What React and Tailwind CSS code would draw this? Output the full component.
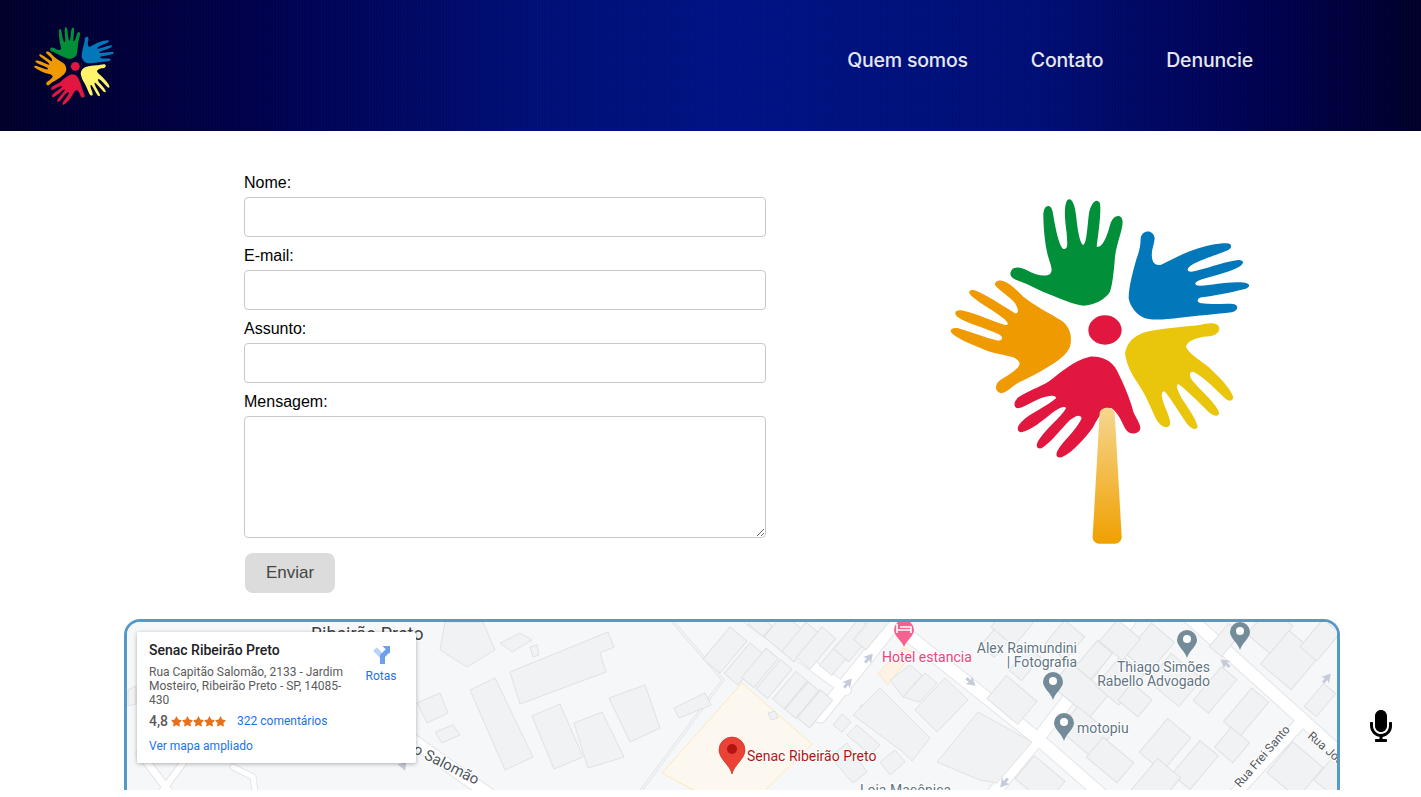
import React from 'react';
import { FaMicrophone, FaStar } from 'react-icons/fa';

const HANDS = {
  green:
    'M245 240C255 228 275 232 295 243C315 254 345 262 360 252C370 242 362 225 356 205C345 170 340 110 340 75C340 45 362 38 368 65C375 105 385 165 400 177C415 180 412 160 410 130C405 90 400 50 412 30C425 20 435 45 438 75C442 110 448 160 460 165C470 160 472 110 477 70C482 40 500 20 510 40C514 70 505 130 500 170C515 175 530 145 540 105C548 75 575 68 578 95C578 120 560 160 555 200C552 240 548 280 540 305C525 330 490 345 460 347C430 345 390 325 350 310C320 297 290 280 265 272C245 265 235 255 245 240Z',
  blue:
    'M632 145C635 120 670 115 674 145C672 170 660 185 668 212C675 228 690 228 705 218C735 205 760 190 790 180C825 168 860 160 890 160C905 160 908 172 895 180C860 195 810 210 785 225C770 235 768 245 785 245C820 240 880 215 925 210C945 210 942 222 925 232C890 250 830 262 805 272C790 280 795 287 810 287C850 285 900 272 945 278C962 282 962 290 945 297C900 308 850 318 815 322C798 326 800 338 815 340C845 345 880 340 910 342C928 346 925 362 905 367C860 372 800 378 750 383C710 388 670 392 645 385C620 375 600 350 596 325C596 290 610 240 620 205C628 185 632 165 632 145Z',
  orange:
    'M215 272C235 275 255 295 280 320C310 345 360 370 395 392C420 410 428 440 420 470C410 495 380 515 355 530C325 548 295 565 270 575C250 585 235 605 215 610C198 608 192 590 205 575C225 560 250 550 265 530C275 518 265 510 250 502C225 495 190 490 165 480C130 465 90 450 68 432C55 420 65 412 85 415C120 425 170 445 205 452C220 450 220 440 205 432C170 415 110 400 82 380C68 365 80 358 100 362C140 370 190 395 225 405C240 405 232 395 220 385C190 360 130 330 118 310C115 298 130 298 145 305C180 322 225 350 255 370C268 372 265 355 255 340C240 320 205 300 195 285C193 275 205 270 215 272Z',
  red:
    'M480 500C510 498 545 510 560 540C580 580 600 625 610 665C618 685 635 705 630 720C620 735 595 735 585 715C575 695 565 670 545 655C525 650 505 680 490 710C465 745 430 785 395 802C375 805 375 790 390 770C410 745 445 710 455 685C450 670 435 680 420 690C395 715 365 755 335 775C318 778 315 765 330 745C350 715 395 680 408 655C405 645 385 655 365 670C340 690 305 720 275 727C260 725 258 712 275 695C300 670 350 650 378 625C378 612 350 618 325 628C300 640 275 655 262 655C250 650 250 635 265 622C290 605 330 590 355 575C390 550 430 510 480 500Z',
  yellow:
    'M585 490C590 460 610 435 650 425C700 415 760 410 810 405C835 398 865 395 868 415C868 435 845 440 820 440C795 445 770 455 768 470C775 490 810 510 835 530C865 560 900 590 910 622C908 635 895 635 885 625C860 600 820 560 790 545C775 545 778 560 790 575C815 605 860 640 868 670C865 682 850 678 835 665C810 640 770 600 745 582C735 585 745 605 755 625C775 655 800 690 803 712C795 722 780 715 770 700C750 670 725 630 705 605C690 600 695 625 705 650C715 675 725 695 718 708C705 718 690 705 680 690C665 660 650 620 630 590C610 560 590 530 585 490Z',
};

function Hands({ yellow }) {
  return (
    <>
      <path d={HANDS.green} fill="#028f3a" />
      <path d={HANDS.blue} fill="#0277ba" />
      <path d={HANDS.orange} fill="#ef9a00" />
      <path d={HANDS.red} fill="#e1173f" />
      <path d={HANDS.yellow} fill={yellow} />
      <ellipse cx="525" cy="420" rx="50" ry="44" fill="#e1173f" />
    </>
  );
}

function BigLogo() {
  return (
    <svg viewBox="0 0 1020 1080" className="w-[340px] h-[360px] shrink-0 mt-[16px] ml-[164px]">
      <defs>
        <linearGradient id="trunk" x1="0" y1="0" x2="0" y2="1">
          <stop offset="0" stopColor="#f6d68f" />
          <stop offset="1" stopColor="#f0a000" />
        </linearGradient>
      </defs>
      <Hands yellow="#e9c50b" />
      <path
        d="M509 668C515 648 548 648 554 668L575 1040C575 1052 566 1061 554 1061H508C496 1061 487 1052 488 1040Z"
        fill="url(#trunk)"
      />
    </svg>
  );
}

// rects follow the street grid: [cx, cy, along, across]
const BUILDINGS = [
  [725, 650, 22, 42], [744, 664, 18, 40], [760, 668, 16, 38], [774, 679, 15, 38], [790, 690, 15, 36], [802, 700, 14, 36], [815, 709, 16, 36],
  [783, 633, 24, 30], [800, 642, 16, 38], [816, 648, 18, 40], [836, 658, 16, 32], [854, 640, 20, 40], [872, 630, 16, 38], [760, 625, 20, 14],
  [997, 640, 18, 30], [1025, 664, 16, 30], [1012, 625, 30, 30],
  [1065, 640, 26, 30], [1094, 660, 20, 34], [1080, 690, 50, 30], [1120, 680, 30, 40], [1150, 648, 30, 40], [1120, 640, 30, 28],
  [1135, 700, 26, 22], [1175, 680, 40, 36], [1215, 690, 20, 44], [1246, 712, 22, 44], [1225, 640, 16, 30], [1290, 660, 40, 44], [1270, 630, 30, 36], [1320, 640, 22, 36],
  [1012, 700, 40, 30], [1085, 732, 44, 30], [1110, 760, 40, 26], [1165, 745, 30, 44], [1195, 765, 24, 44], [1232, 745, 24, 26], [1320, 700, 16, 30], [1295, 770, 40, 40], [1335, 778, 30, 30],
  [1155, 785, 30, 44], [1040, 780, 40, 30],
];

const PLAIN = [
  '510,672 608,632 614,647 600,653 606,672 520,704',
  '530,647 537,645 539,655 533,657',
  '532,716 560,704 583,757 554,769',
  '574,723 602,712 624,757 588,768',
  '609,698 645,685 660,728 630,742',
  '674,708 705,693 711,705 679,718',
  '470,690 495,678 533,757 505,770',
  '417,703 440,693 448,713 427,723',
  '435,732 453,725 460,735 442,743',
  '445,622 483,622 495,650 467,667 440,650',
  '500,643 520,633 532,640 512,652',
  '768,713 775,711 778,718 771,720',
  '860,706 868,703 871,712 863,715',
  '128,690 136,686 136,704 128,706',
  '853,715 880,688 930,738 912,761 903,752',
  '890,680 910,665 922,675 903,697',
  '903,697 925,673 937,683 920,702',
  '915,710 945,678 968,700 937,732',
  '937,762 978,712 1032,742 997,783 980,780',
  '833,725 842,714 851,722 842,732',
  '847,735 857,725 880,745 870,755',
  '830,757 847,743 867,772 853,783',
  '880,762 895,750 905,762 890,775',
];

const ROADS = [
  ['M1130 620L1037 740L970 822', 12],
  ['M889 620L1037 738L1110 802', 12],
  ['M1190 618L1303 720L1345 758', 12],
  ['M1303 720L1225 805', 11],
  ['M903 612L820 716', 13],
  ['M750 620L846 690', 10],
  ['M395 728L490 795', 12],
  ['M140 753L168 790', 7],
  ['M183 763L163 790', 6],
  ['M233 767L253 777L255 792', 5],
  ['M673 622L723 680L640 792', 1],
];

const ARROWS = [
  [848, 683, 40], [869, 658, 40], [971, 682, 130], [1225, 663, 310], [1327, 678, 40], [1004, 783, 220], [403, 765, 160],
];

const GREY_PINS = [[1053, 682], [1064, 723], [1187, 640], [1240, 632]];

const PIN = 'M0 18C-2 11-10 6-10 0A10 10 0 1 1 10 0C10 6 2 11 0 18Z';

const LABEL = {
  stroke: '#ffffff',
  strokeWidth: 2,
  paintOrder: 'stroke',
};

function MapDrawing() {
  return (
    <svg viewBox="127 622 1210 168" className="block w-[1210px] h-[168px] bg-[#f6f7f9] font-['Roboto',sans-serif]">
      <polygon points="742,683 812,744 740,815 662,773" fill="#fdf8ef" stroke="#fce7b9" />
      <polygon points="878,673 903,648 913,652 888,685" fill="#fdf3e4" stroke="#fbe6c4" />
      {ROADS.map(([d, w], i) => (
        <path key={`c${i}`} d={d} fill="none" stroke="#e3e5e9" strokeWidth={w + 2} strokeLinecap="round" />
      ))}
      {ROADS.map(([d, w], i) => (
        <path key={`r${i}`} d={d} fill="none" stroke="#ffffff" strokeWidth={w} strokeLinecap="round" />
      ))}
      {BUILDINGS.map(([cx, cy, w, h], i) => (
        <rect
          key={i}
          x={cx - w / 2}
          y={cy - h / 2}
          width={w}
          height={h}
          fill="#f1f2f4"
          stroke="#e0e1e4"
          transform={`rotate(40 ${cx} ${cy})`}
        />
      ))}
      {PLAIN.map((points) => (
        <polygon key={points} points={points} fill="#f1f2f4" stroke="#e0e1e4" />
      ))}
      {ARROWS.map(([x, y, a]) => (
        <path key={`${x}${y}`} d="M0 -6L5 3L1.5 1.5L1.5 6H-1.5L-1.5 1.5L-5 3Z" fill="#c6cbdb" transform={`translate(${x} ${y}) rotate(${a})`} />
      ))}

      <text x="311" y="640" fontSize="18" fill="#3c4043" {...LABEL}>Ribeirão Preto</text>
      <text x="0" y="0" fontSize="15" fill="#50565c" textAnchor="end" transform="translate(476 785) rotate(27)" {...LABEL}>
        Rua Capitão Salomão
      </text>

      <g transform="translate(904 630)">
        <path d="M0 17C-2 11-10 6-10 0A10 10 0 1 1 10 0C10 6 2 11 0 17Z" fill="#f4628f" />
        <path d="M-7 -6V3M-7 0H7V3M-4 -3H7V0" stroke="#ffffff" strokeWidth="1.6" fill="none" />
      </g>
      <text x="882" y="662" fontSize="14" fill="#e8447a" {...LABEL}>Hotel estancia</text>

      <text x="1077" y="653" fontSize="14" fill="#5f7583" textAnchor="end" {...LABEL}>Alex Raimundini</text>
      <text x="1077" y="667" fontSize="14" fill="#5f7583" textAnchor="end" {...LABEL}>| Fotografia</text>
      <text x="1210" y="672" fontSize="14" fill="#5f7583" textAnchor="end" {...LABEL}>Thiago Simões</text>
      <text x="1210" y="686" fontSize="14" fill="#5f7583" textAnchor="end" {...LABEL}>Rabello Advogado</text>
      <text x="1077" y="733" fontSize="14" fill="#5f7583" {...LABEL}>motopiu</text>
      <text x="860" y="795" fontSize="14" fill="#5f7583" {...LABEL}>Loja Maçônica</text>
      {GREY_PINS.map(([x, y]) => (
        <g key={x} transform={`translate(${x} ${y})`}>
          <path d={PIN} fill="#748c9a" />
          <circle cx="0" cy="-1" r="4" fill="#ffffff" />
        </g>
      ))}

      <g transform="translate(732 750)">
        <path d="M0 24C-2 15-13 9-13 0A13 13 0 1 1 13 0C13 9 2 15 0 24Z" fill="#ea4335" stroke="#c5221f" strokeWidth="0.6" />
        <circle cx="0" cy="-1" r="5" fill="#b31412" />
      </g>
      <text x="747" y="761" fontSize="14" fill="#b31412" {...LABEL}>Senac Ribeirão Preto</text>

      <text transform="translate(1240 788) rotate(-49)" fontSize="12" fill="#50565c" {...LABEL}>Rua Frei Santo</text>
      <text transform="translate(1307 737) rotate(41)" fontSize="12" fill="#50565c" {...LABEL}>Rua João</text>
    </svg>
  );
}

function PlaceCard() {
  return (
    <div className="absolute left-[10px] top-[10px] w-[279px] h-[131px] bg-white shadow-[0_1px_4px_rgba(0,0,0,0.3)] rounded-[2px] pl-[12px] pt-[10px] font-['Roboto',sans-serif]">
      <p className="text-[14px] leading-[17px] font-medium text-[#202124]">Senac Ribeirão Preto</p>
      <p className="mt-[6px] w-[200px] text-[12px] leading-[14px] text-[#5b5b5b]">
        Rua Capitão Salomão, 2133 - Jardim Mosteiro, Ribeirão Preto - SP, 14085-430
      </p>
      <div className="flex items-center mt-[4px] h-[20px]">
        <span className="text-[14px] text-[#5b5b5b] font-medium">4,8</span>
        <span className="flex ml-[3px]">
          {[0, 1, 2, 3, 4].map((i) => (
            <FaStar key={i} className="w-[11px] h-[11px] text-[#e7711b]" />
          ))}
        </span>
        <span className="ml-[11px] text-[12px] text-[#1a73e8]">322 comentários</span>
      </div>
      <p className="mt-[8px] text-[12px] leading-[14px] text-[#1a73e8]">Ver mapa ampliado</p>
      <div className="absolute left-[229px] top-[14px] w-[30px] flex flex-col items-center">
        <svg viewBox="0 0 18 18" className="w-[18px] h-[18px]">
          <path d="M10.5 11L3 3" stroke="#b9d2f8" strokeWidth="5" fill="none" />
          <path d="M8 18V10L14 4" stroke="#6c9fec" strokeWidth="5" fill="none" transform="translate(2.5 0)" />
          <path d="M10.5 0H18V7.5Z" fill="#6c9fec" />
        </svg>
        <span className="mt-[5px] text-[12px] leading-[14px] text-[#1a73e8]">Rotas</span>
      </div>
    </div>
  );
}

function Field({ label, area }) {
  const cls = 'block w-[522px] border border-[#c8c8c8] rounded-[4px] bg-white';
  return (
    <div className="mb-[10px]">
      <label className="block text-[16px] leading-[18px] text-black mb-[5px]">{label}</label>
      {area ? <textarea className={`${cls} h-[122px] resize-y`} /> : <input type="text" className={`${cls} h-[40px]`} />}
    </div>
  );
}

export default function App() {
  return (
    <div className="relative h-[797px] overflow-hidden bg-white font-['Liberation_Sans',Arial,sans-serif]">
      <header className="relative h-[131px] flex items-center justify-between pl-[34px] pr-[168px] bg-[linear-gradient(to_right,#00002a_0%,#00004e_18%,#000f78_38%,#001285_52%,#000f78_72%,#00004e_90%,#00002a_100%)]">
        <div className="absolute inset-0 bg-[repeating-linear-gradient(90deg,rgba(255,255,255,0.012)_0_1px,transparent_1px_3px),repeating-linear-gradient(0deg,rgba(0,0,0,0.04)_0_1px,transparent_1px_3px)]" />
        <svg viewBox="60 28 900 777" preserveAspectRatio="none" className="relative w-[80px] h-[78px]">
          <Hands yellow="#fff36b" />
        </svg>
        <nav className="relative flex gap-[63px] pb-[10px] font-['Inter',sans-serif] font-medium text-[19.5px] tracking-[-0.2px] text-[#e6e8f2]">
          <a>Quem somos</a>
          <a>Contato</a>
          <a>Denuncie</a>
        </nav>
      </header>

      <main className="flex items-start pl-[244px] pt-[43px]">
        <form className="w-[522px]">
          <Field label="Nome:" />
          <Field label="E-mail:" />
          <Field label="Assunto:" />
          <Field label="Mensagem:" area />
          <button type="button" className="block mt-[15px] ml-[1px] w-[90px] h-[40px] rounded-[8px] bg-[#dcdcdc] text-[17px] text-[#444444]">
            Enviar
          </button>
        </form>
        <BigLogo />
      </main>

      <section className="relative mt-[26px] ml-[124px] w-[1216px] h-[171px] overflow-hidden border-[3px] border-b-0 border-[#5599c7] rounded-t-[16px]">
        <MapDrawing />
        <PlaceCard />
      </section>

      <FaMicrophone className="absolute left-[1370px] top-[710px] w-[22px] h-[32px] text-black" />
    </div>
  );
}
